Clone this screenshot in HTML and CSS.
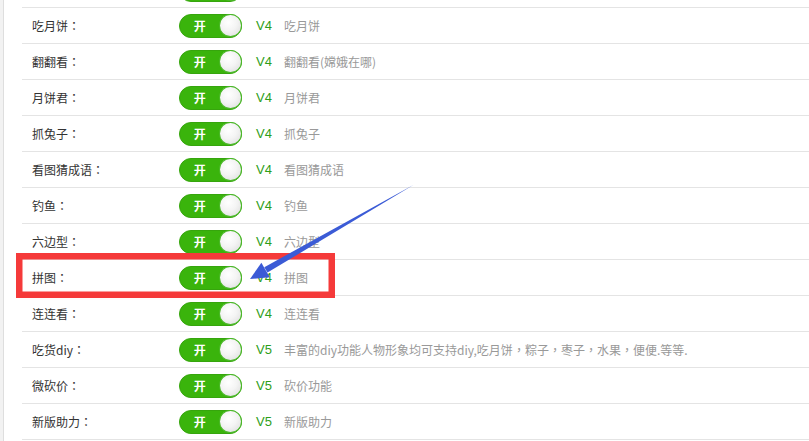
FILE: index.html
```html
<!DOCTYPE html>
<html lang="zh-CN">
<head>
<meta charset="utf-8">
<title>插件列表</title>
<link rel="stylesheet" href="styles.css">
</head>
<body>
<div class="page">
  <ul class="list">
    <li class="row"><span class="label">砸金蛋<span class="colon" lang="zh-TW">：</span></span><span class="switch"><span class="on">开</span><span class="knob"></span></span><span class="ver">V4</span><span class="desc">砸金蛋</span></li>
    <li class="row"><span class="label">吃月饼<span class="colon" lang="zh-TW">：</span></span><span class="switch"><span class="on">开</span><span class="knob"></span></span><span class="ver">V4</span><span class="desc">吃月饼</span></li>
    <li class="row"><span class="label">翻翻看<span class="colon" lang="zh-TW">：</span></span><span class="switch"><span class="on">开</span><span class="knob"></span></span><span class="ver">V4</span><span class="desc">翻翻看(嫦娥在哪)</span></li>
    <li class="row"><span class="label">月饼君<span class="colon" lang="zh-TW">：</span></span><span class="switch"><span class="on">开</span><span class="knob"></span></span><span class="ver">V4</span><span class="desc">月饼君</span></li>
    <li class="row"><span class="label">抓兔子<span class="colon" lang="zh-TW">：</span></span><span class="switch"><span class="on">开</span><span class="knob"></span></span><span class="ver">V4</span><span class="desc">抓兔子</span></li>
    <li class="row"><span class="label">看图猜成语<span class="colon" lang="zh-TW">：</span></span><span class="switch"><span class="on">开</span><span class="knob"></span></span><span class="ver">V4</span><span class="desc">看图猜成语</span></li>
    <li class="row"><span class="label">钓鱼<span class="colon" lang="zh-TW">：</span></span><span class="switch"><span class="on">开</span><span class="knob"></span></span><span class="ver">V4</span><span class="desc">钓鱼</span></li>
    <li class="row"><span class="label">六边型<span class="colon" lang="zh-TW">：</span></span><span class="switch"><span class="on">开</span><span class="knob"></span></span><span class="ver">V4</span><span class="desc">六边型</span></li>
    <li class="row"><span class="label">拼图<span class="colon" lang="zh-TW">：</span></span><span class="switch"><span class="on">开</span><span class="knob"></span></span><span class="ver">V4</span><span class="desc">拼图</span></li>
    <li class="row"><span class="label">连连看<span class="colon" lang="zh-TW">：</span></span><span class="switch"><span class="on">开</span><span class="knob"></span></span><span class="ver">V4</span><span class="desc">连连看</span></li>
    <li class="row"><span class="label">吃货diy<span class="colon" lang="zh-TW">：</span></span><span class="switch"><span class="on">开</span><span class="knob"></span></span><span class="ver">V5</span><span class="desc">丰富的diy功能人物形象均可支持diy,吃月饼<span class="p" lang="zh-TW">，</span>粽子<span class="p" lang="zh-TW">，</span>枣子<span class="p" lang="zh-TW">，</span>水果<span class="p" lang="zh-TW">，</span>便便.等等.</span></li>
    <li class="row"><span class="label">微砍价<span class="colon" lang="zh-TW">：</span></span><span class="switch"><span class="on">开</span><span class="knob"></span></span><span class="ver">V5</span><span class="desc">砍价功能</span></li>
    <li class="row"><span class="label">新版助力<span class="colon" lang="zh-TW">：</span></span><span class="switch"><span class="on">开</span><span class="knob"></span></span><span class="ver">V5</span><span class="desc">新版助力</span></li>
  </ul>
</div>
<svg class="annot" width="809" height="441" viewBox="0 0 809 441" xmlns="http://www.w3.org/2000/svg">
  <rect x="19.25" y="256.25" width="312.5" height="38.5" fill="none" stroke="#f53a3a" stroke-width="6.5"/>
  <polygon points="415,184 414.2,184.6 264.3,267.2 267.5,272.6" fill="#3b5bd6"/>
  <polygon points="250,279 261.4,262.8 269.8,277.2" fill="#3b5bd6"/>
</svg>
</body>
</html>
```
FILE: styles.css
```css
html, body {
  margin: 0;
  padding: 0;
}
body {
  width: 809px;
  height: 441px;
  overflow: hidden;
  background: #f2f2f2;
  position: relative;
  font-family: "Noto Sans CJK SC", "Noto Sans", "Liberation Sans", sans-serif;
  font-size: 12px;
}
.page {
  margin-left: 3px;
  height: 441px;
  overflow: hidden;
  background: #fff;
  border-left: 1px solid #dedede;
}
.list {
  list-style: none;
  margin: -28px 0 0 18px;
  padding: 0;
}
.row {
  display: flex;
  align-items: center;
  height: 35px;
  border-bottom: 1px solid #e4e4e4;
  padding-left: 10px;
}
.label {
  width: 147px;
  color: #333;
  line-height: 16px;
}
.colon {
  font-family: "Noto Sans CJK TC", "Noto Sans CJK SC", sans-serif;
}
.p {
  font-family: "Noto Sans CJK TC", "Noto Sans CJK SC", sans-serif;
}
.switch {
  box-sizing: border-box;
  width: 63px;
  height: 24px;
  border-radius: 12px;
  background: #3ab40c;
  border: 1px solid #36a50d;
  display: flex;
  align-items: center;
  justify-content: space-between;
}
.on {
  color: #fff;
  font-weight: bold;
  font-size: 12px;
  width: 40px;
  text-align: center;
  line-height: 16px;
}
.knob {
  box-sizing: border-box;
  width: 23px;
  height: 23px;
  margin-right: -1px;
  border-radius: 50%;
  border: 1px solid #4cb82a;
  background: radial-gradient(circle at 40% 35%, #ffffff 0%, #f4f4f4 45%, #dadada 100%);
}
.ver {
  margin-left: 14px;
  width: 28px;
  color: #2f9e1a;
  font-family: "Liberation Sans", "Noto Sans", sans-serif;
  font-size: 13px;
}
.desc {
  color: #999;
  line-height: 16px;
}
.annot {
  position: absolute;
  left: 0;
  top: 0;
  pointer-events: none;
}
```
